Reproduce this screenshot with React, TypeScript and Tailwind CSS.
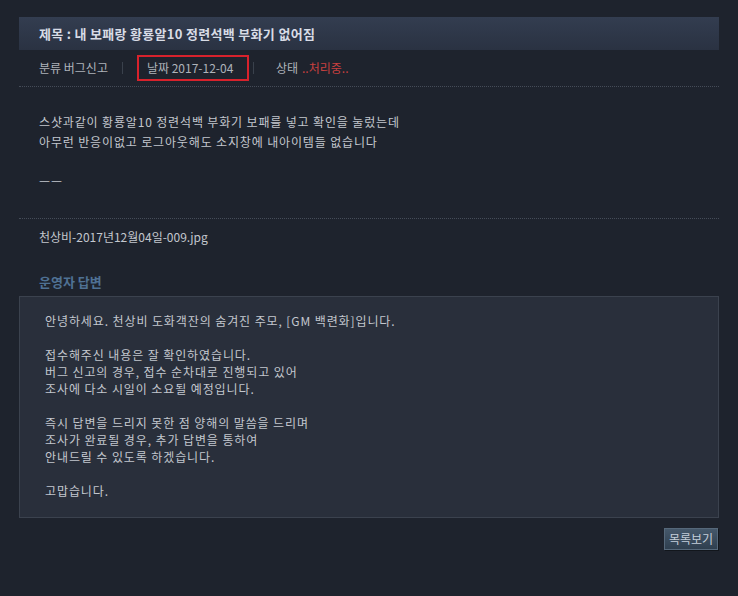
export default function App() {
  const answer = [
    "안녕하세요. 천상비 도화객잔의 숨겨진 주모, [GM 백련화]입니다.",
    "",
    "접수해주신 내용은 잘 확인하였습니다.",
    "버그 신고의 경우, 접수 순차대로 진행되고 있어",
    "조사에 다소 시일이 소요될 예정입니다.",
    "",
    "즉시 답변을 드리지 못한 점 양해의 말씀을 드리며",
    "조사가 완료될 경우, 추가 답변을 통하여",
    "안내드릴 수 있도록 하겠습니다.",
    "",
    "고맙습니다.",
  ];

  return (
    <div className="w-[738px] h-[596px] bg-[#1e232d] pt-[17px] px-[19px] font-['Noto_Sans_CJK_KR',sans-serif] text-[12px] text-[#c3c7ce]">
      {/* title bar */}
      <div className="h-[33px] flex items-center pl-5 bg-gradient-to-b from-[#333d50] to-[#2a3242] text-[13px] font-bold text-[#d8dce6] tracking-[0.3px]">
        제목 : 내 보패랑 황룡알10 정련석백 부화기 없어짐
      </div>

      {/* meta row */}
      <div className="h-[37px] flex items-center pl-5 border-b border-dotted border-[#454c58] text-[#aeb3ba]">
        <span>분류 버그신고</span>
        <span className="mx-[14px] w-px h-[12px] bg-[#3a414c]" />
        <span className="h-[26px] w-[112px] flex items-center pl-[8px] border-2 border-[#d8222c]">
          날짜 2017-12-04
        </span>
        <span className="mx-[4px] w-px h-[12px] bg-[#3a414c]" />
        <span className="ml-[18px]">상태</span>
        <span className="ml-[4px] text-[#c8403f]">..처리중..</span>
      </div>

      {/* body */}
      <div className="pt-[25px] pb-[26px] pl-5 leading-[20px] tracking-[0.85px] border-b border-dotted border-[#454c58]">
        <p>스샷과같이 황룡알10 정련석백 부화기 보패를 넣고 확인을 눌렀는데</p>
        <p>아무런 반응이없고 로그아웃해도 소지창에 내아이템들 없습니다</p>
        <p>&nbsp;</p>
        <p>ㅡㅡ</p>
      </div>

      <div className="pt-[8px] pl-5 leading-[20px]">천상비-2017년12월04일-009.jpg</div>

      {/* answer */}
      <div className="mt-[25px] pl-5 text-[13px] font-bold text-[#4f7194] leading-[20px]">운영자 답변</div>
      <div className="mt-[4px] h-[222px] bg-[#292f3b] border border-[#3b424e] pt-[15px] pl-[25px] leading-[17px] tracking-[0.9px] text-[#c3c7ce]">
        {answer.map((line, i) => (
          <p key={i}>{line || "\u00a0"}</p>
        ))}
      </div>

      <div className="flex justify-end mt-[10px] pr-px">
        <button className="h-[22px] w-[54px] bg-gradient-to-b from-[#45586b] to-[#2f3f4f] border border-[#56687a] shadow-[1px_1px_0_#12161c] text-[#c3ced9] text-[12px] leading-none">
          목록보기
        </button>
      </div>
    </div>
  );
}
